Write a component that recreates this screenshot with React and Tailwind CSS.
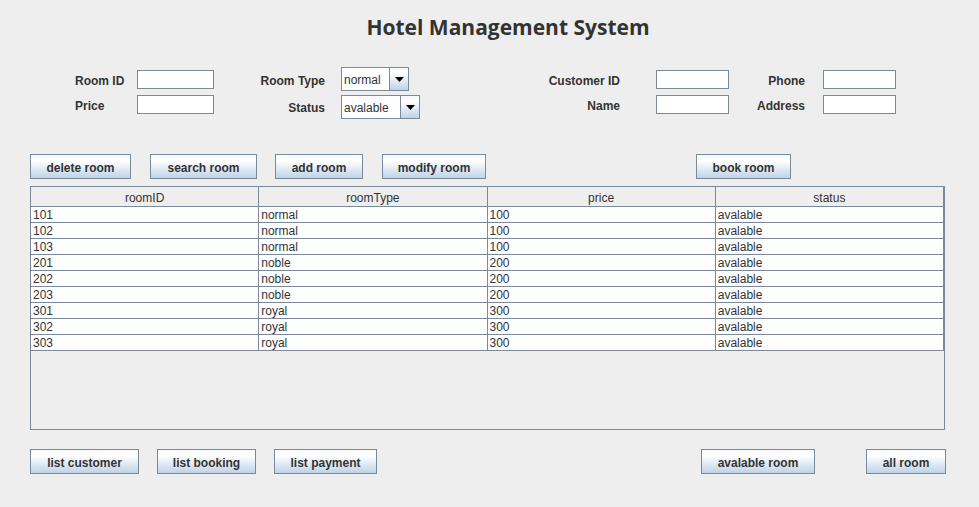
import { useState } from 'react';

const rooms = [
  ['101', 'normal', '100', 'avalable'],
  ['102', 'normal', '100', 'avalable'],
  ['103', 'normal', '100', 'avalable'],
  ['201', 'noble', '200', 'avalable'],
  ['202', 'noble', '200', 'avalable'],
  ['203', 'noble', '200', 'avalable'],
  ['301', 'royal', '300', 'avalable'],
  ['302', 'royal', '300', 'avalable'],
  ['303', 'royal', '300', 'avalable'],
];

const columns = ['roomID', 'roomType', 'price', 'status'];

function Button({ label, className }) {
  return (
    <button
      className={
        'h-[25px] border border-[#7a8a99] bg-linear-to-b from-[#f6f9fc] via-white via-25% to-[#bed3e8] pt-[2px] text-[12px] font-bold text-[#333333] leading-none ' +
        className
      }
    >
      {label}
    </button>
  );
}

function Field({ className }) {
  return <div className={'h-[19px] border border-[#7a8a99] bg-white ' + className} />;
}

function Combo({ value, width, className, textPad }) {
  return (
    <div className={'flex h-[24px] border border-[#7a8a99] bg-white ' + width + ' ' + className}>
      <div className={'flex flex-1 items-center pl-[2px] text-[12px] text-[#333333] ' + textPad}>{value}</div>
      <div className="flex w-[19px] items-center justify-center border-l border-[#7a8a99] bg-linear-to-b from-[#f6f9fc] via-white via-25% to-[#bed3e8]">
        <svg width="9" height="5" viewBox="0 0 9 5">
          <path d="M0 0 H9 L4.5 5 Z" fill="#000" />
        </svg>
      </div>
    </div>
  );
}

function Label({ text, className }) {
  return <div className={'text-[12px] font-bold leading-[16px] text-[#333333] ' + className}>{text}</div>;
}

export default function App() {
  const [selected] = useState(null);

  return (
    <div
      className="h-[507px] w-[979px] overflow-hidden bg-[#eeeeee]"
      style={{ fontFamily: '"Liberation Sans", Arial, sans-serif' }}
    >
      <h1
        className="pt-[12px] pl-[37px] text-center text-[21px] font-bold leading-[30px] text-[#333333]"
        style={{ fontFamily: '"Open Sans", "Noto Sans", sans-serif' }}
      >
        Hotel Management System
      </h1>

      {/* form row 1 */}
      <div className="mt-[25px] flex h-[25px] items-start pl-[75px]">
        <Label text="Room ID" className="mt-[6px] w-[62px]" />
        <Field className="mt-[3px] w-[77px]" />
        <Label text="Room Type" className="mt-[6px] w-[111px] text-right" />
        <div className="ml-[16px] w-[99px]">
          <Combo value="normal" width="w-[68px]" textPad="pt-[2px]" />
        </div>
        <Label text="Customer ID" className="mt-[6px] w-[180px] text-right" />
        <Field className="mt-[3px] ml-[36px] w-[73px]" />
        <Label text="Phone" className="mt-[6px] w-[76px] text-right" />
        <Field className="mt-[3px] ml-[18px] w-[73px]" />
      </div>

      {/* form row 2 */}
      <div className="mt-[3px] flex h-[25px] items-start pl-[75px]">
        <Label text="Price" className="mt-[3px] w-[62px]" />
        <Field className="w-[77px]" />
        <Label text="Status" className="mt-[5px] w-[111px] text-right" />
        <div className="ml-[16px] w-[99px]">
          <Combo value="avalable" width="w-[79px]" textPad="pt-[1px]" />
        </div>
        <Label text="Name" className="mt-[3px] w-[180px] text-right" />
        <Field className="ml-[36px] w-[73px]" />
        <Label text="Address" className="mt-[3px] w-[76px] text-right" />
        <Field className="ml-[18px] w-[73px]" />
      </div>

      <div className="mt-[34px] flex pl-[30px]">
        <Button label="delete room" className="w-[101px]" />
        <Button label="search room" className="ml-[19px] w-[107px]" />
        <Button label="add room" className="ml-[18px] w-[88px]" />
        <Button label="modify room" className="ml-[19px] w-[104px]" />
        <Button label="book room" className="ml-[210px] w-[95px]" />
      </div>

      {/* room table */}
      <div className="mt-[7px] ml-[30px] h-[244px] w-[915px] border border-[#7a8a99]">
        <div className="grid w-[913px] grid-cols-4">
          {columns.map((c) => (
            <div
              key={c}
              className="h-[20px] overflow-hidden border-r border-b border-[#7a8a99] text-center text-[12px] leading-[22px] text-[#333333]"
            >
              {c}
            </div>
          ))}
          {rooms.map((row, i) =>
            row.map((cell, j) => (
              <div
                key={i + '-' + j}
                className={
                  'h-[16px] overflow-hidden border-r border-b border-[#7a8a99] pl-[2px] text-[12px] leading-[17px] text-[#333333] ' +
                  (selected === i ? 'bg-[#b8cfe5]' : 'bg-white')
                }
              >
                {cell}
              </div>
            ))
          )}
        </div>
      </div>

      <div className="mt-[19px] flex pl-[30px]">
        <Button label="list customer" className="w-[109px]" />
        <Button label="list booking" className="ml-[18px] w-[99px]" />
        <Button label="list payment" className="ml-[18px] w-[103px]" />
        <Button label="avalable room" className="ml-[324px] w-[114px]" />
        <Button label="all room" className="ml-[51px] w-[80px]" />
      </div>
    </div>
  );
}
